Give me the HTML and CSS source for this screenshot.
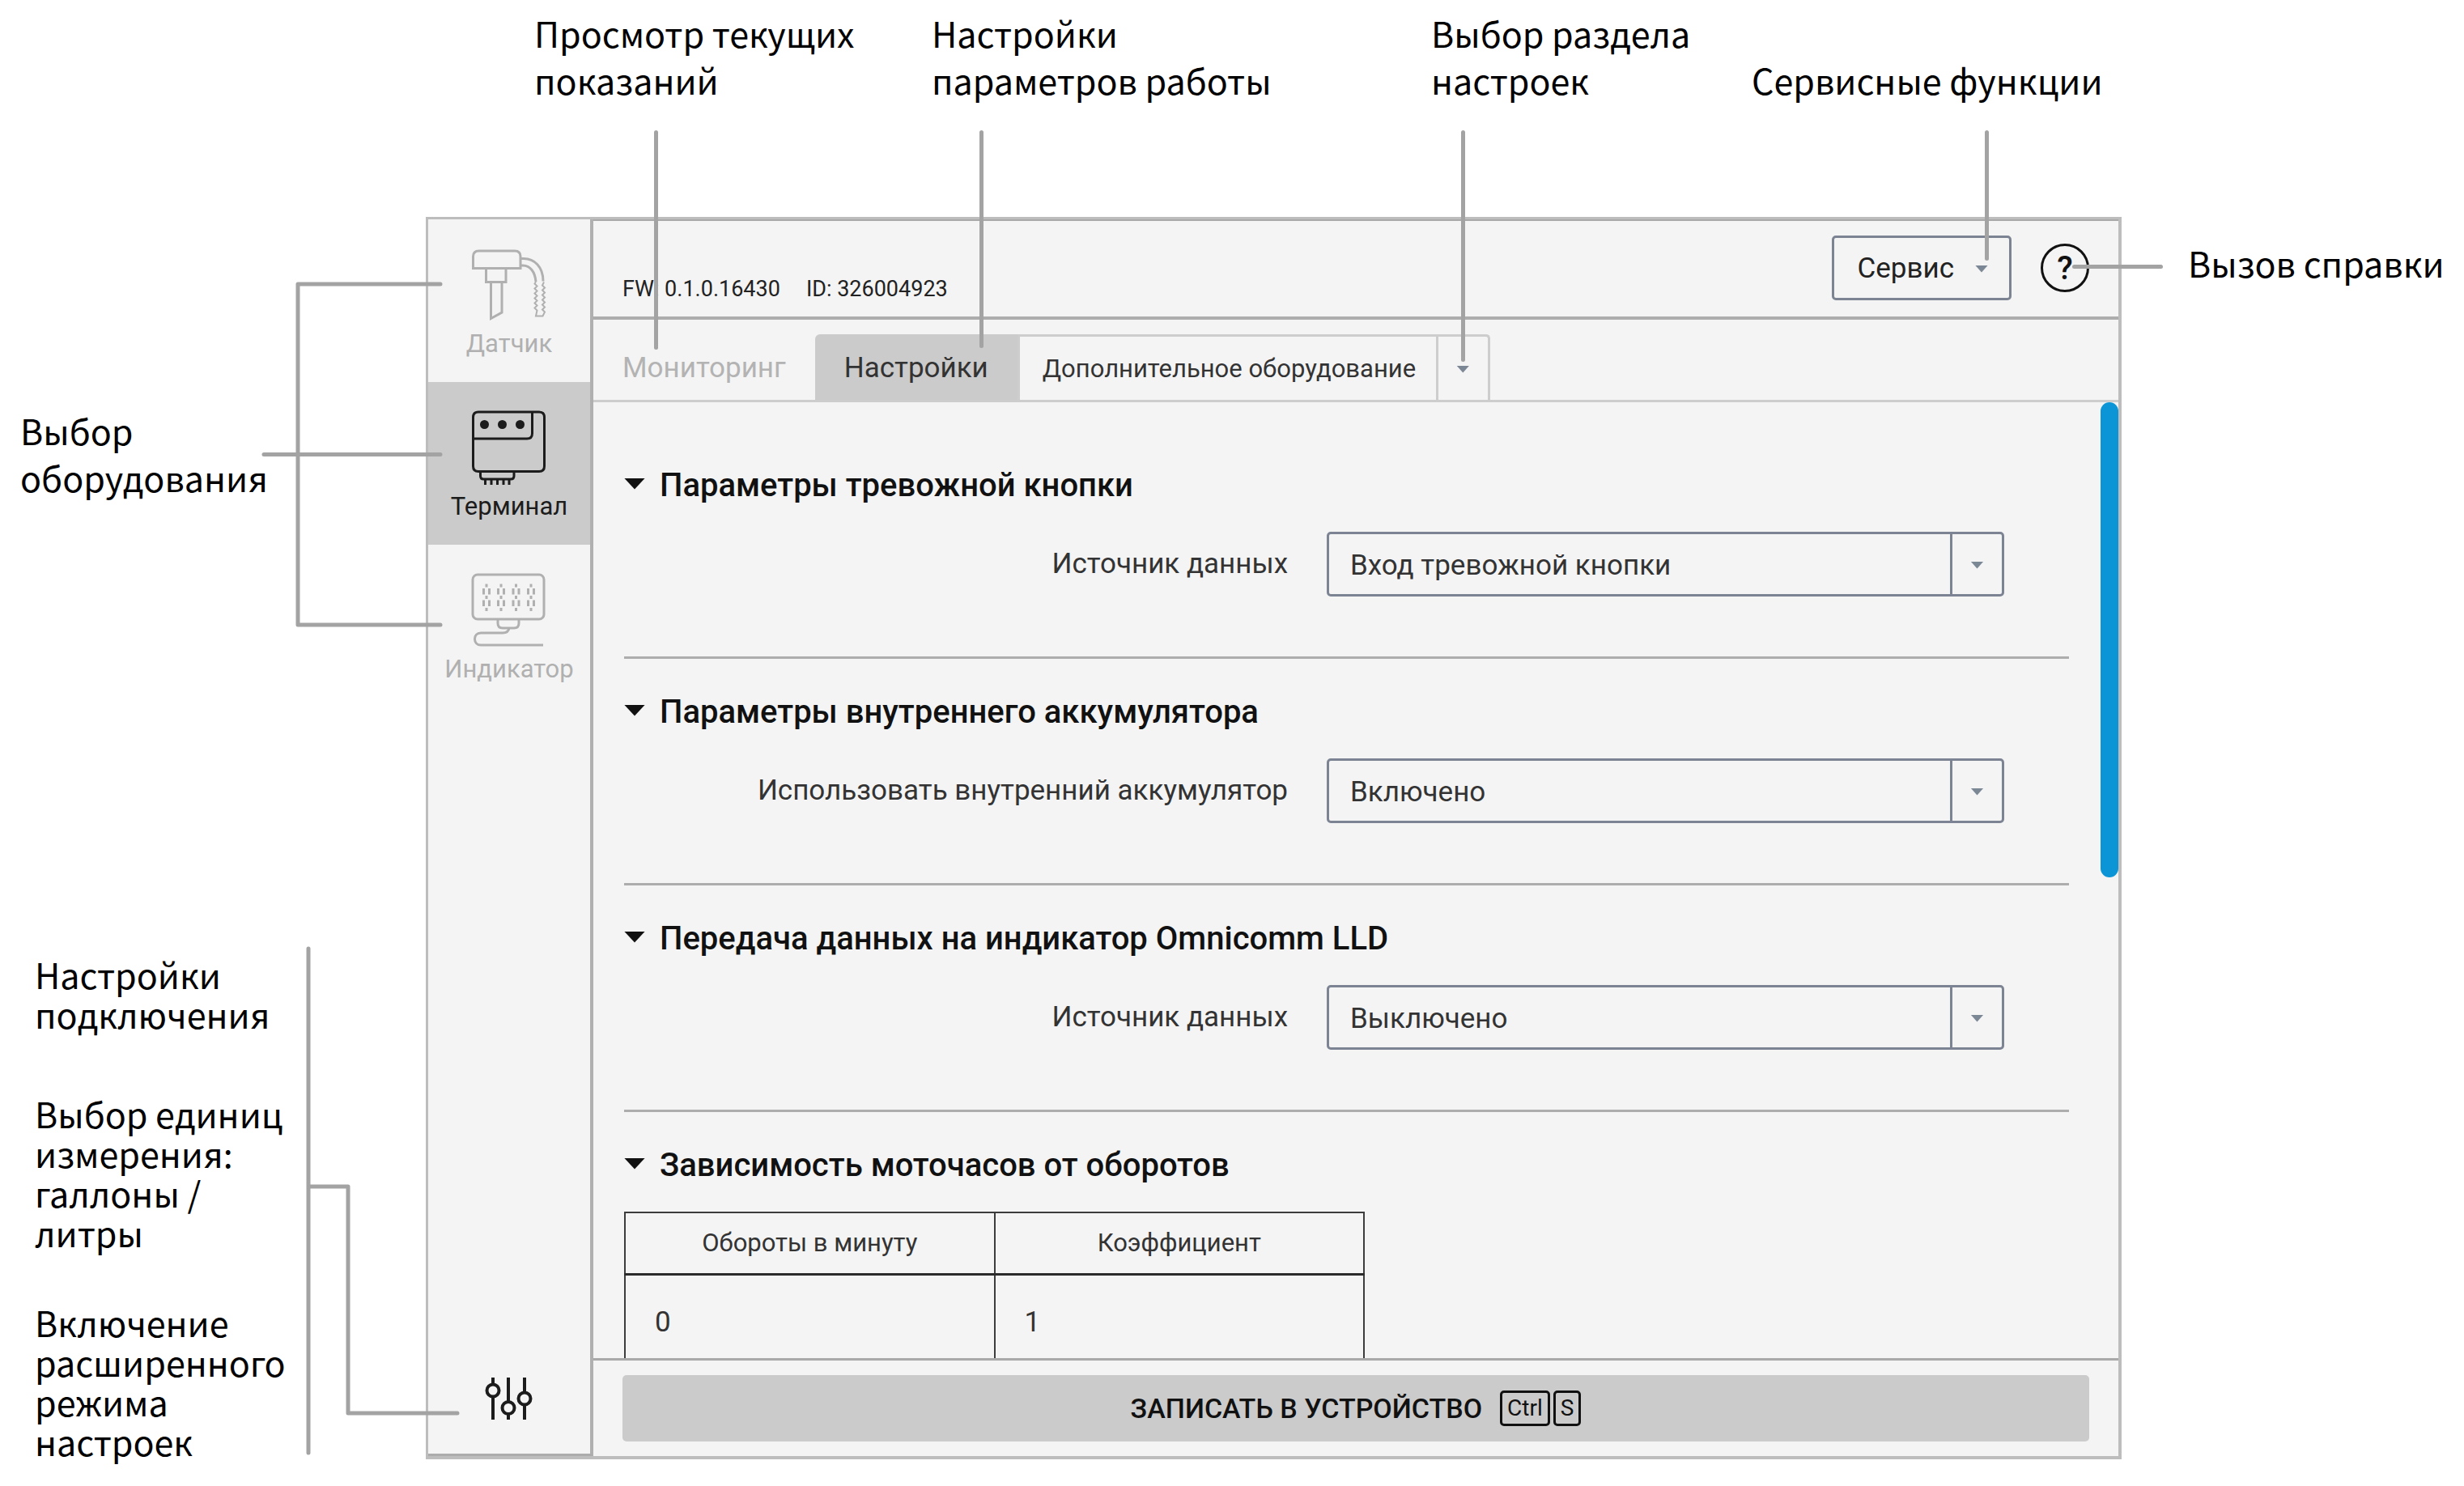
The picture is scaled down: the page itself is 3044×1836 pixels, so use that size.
FILE: index.html
```html
<!DOCTYPE html>
<html lang="ru">
<head>
<meta charset="utf-8">
<title>Настройки терминала</title>
<link rel="stylesheet" href="styles.css">
</head>
<body>
<div class="page">
  <div class="notes-top">
    <p class="note note-view">Просмотр текущих<br>показаний<span class="lead"></span></p>
    <p class="note note-params">Настройки<br>параметров работы<span class="lead"></span></p>
    <p class="note note-section">Выбор раздела<br>настроек<span class="lead"></span></p>
    <p class="note note-service"><br>Сервисные функции<span class="lead"></span></p>
  </div>

  <div class="notes-left">
    <div class="note note-equipment">Выбор<br>оборудования
      <svg class="bracket bracket-equipment" width="230" height="430" viewBox="0 0 230 430" aria-hidden="true">
        <path d="M221 5H45V426H221M3 215.500H221"/>
      </svg>
    </div>
    <div class="note-group">
      <p class="note note-tight note-first">Настройки<br>подключения</p>
      <p class="note note-tight">Выбор единиц<br>измерения:<br>галлоны /<br>литры</p>
      <p class="note note-tight">Включение<br>расширенного<br>режима<br>настроек</p>
      <svg class="bracket bracket-group" width="192" height="632" viewBox="0 0 192 632" aria-hidden="true">
        <path d="M3 3V626M3 297H52V577H187"/>
      </svg>
    </div>
  </div>

  <div class="window">
    <nav class="sidebar">
      <button type="button" class="device">
        <svg class="device-icon" viewBox="19 14 100 100" aria-hidden="true">
          <path d="M24.500 42.500V28q0-7 7-7H76q7 0 7 7v14.500zM40.500 43v16.500H65V43M46.500 60v44.500L60 97V60M84 30.500h3c13 0 24 10 24 28M84 39h2c9 0 15 8 16 20"/>
          <path class="thin" d="M102 59l-1.500 2.500 3 3-3 3 3 3-3 3 3 3-3 3 3 3-3 3 3 3-3 3 3 3-1.500 7H110.500l2.500-5-3-3 3-3-3-3 3-3-3-3 3-3-3-3 3-3-3-3 3-3-3-3 2-4"/>
        </svg>
        <span>Датчик</span>
      </button>
      <button type="button" class="device device-active">
        <svg class="device-icon" viewBox="19 15 100 100" aria-hidden="true">
          <path d="M31 20H106q6.500 0 6.500 6.500V87q0 6.500-6.500 6.500H31q-6.500 0-6.500-6.500V26.500Q24.500 20 31 20zM25 53H91q6.500 0 6.500-6.500V20M33.500 94v5q0 4 4 4H71q4 0 4-4V94"/>
          <path d="M39.500 103v7M47 103v7M54.500 103v7M62 103v7M69 103v7"/>
          <g class="solid"><circle cx="38.500" cy="35.500" r="5.500"/><circle cx="60.500" cy="35.500" r="5.500"/><circle cx="82.500" cy="35.500" r="5.500"/></g>
        </svg>
        <span>Терминал</span>
      </button>
      <button type="button" class="device">
        <svg class="device-icon" viewBox="19 16 100 100" aria-hidden="true">
          <rect x="24" y="21" width="88" height="55" rx="6"/>
          <path d="M55 77v4q0 6 6 6H75q6 0 6-6v-4M69 87q-1 6-8 6H34c-10 0-10 15 0 15H111"/>
          <g class="digits">
            <path d="M37.500 38v7.500m7-7.500v7.500M37.500 52.500V60m7-7.500V60M41 32.500v4m0 10.500v4m0 11v4"/>
            <path d="M55.500 38v7.500m7-7.500v7.500M55.500 52.500V60m7-7.500V60M59 32.500v4m0 10.500v4m0 11v4"/>
            <path d="M74 38v7.500m7-7.500v7.500M74 52.500V60m7-7.500V60M77.500 32.500v4m0 10.500v4m0 11v4"/>
            <path d="M92.500 38v7.500m7-7.500v7.500M92.500 52.500V60m7-7.500V60M96 32.500v4m0 10.500v4m0 11v4"/>
          </g>
        </svg>
        <span>Индикатор</span>
      </button>
      <button type="button" class="tune" aria-label="Настройки программы">
        <svg width="60" height="52" viewBox="0 0 60 52" aria-hidden="true">
          <path d="M10 0v8M10 23v29M29 0v30M29 45v7M49 0v18M49 33v19"/>
          <circle cx="10" cy="16" r="7.500"/><circle cx="29" cy="37.500" r="7.500"/><circle cx="49" cy="26" r="7.500"/>
        </svg>
      </button>
    </nav>

    <main class="main">
      <header class="header">
        <div class="versions"><span>FW: 0.1.0.16430</span><span>ID: 326004923</span></div>
        <div class="tools">
          <button type="button" class="service">Сервис<span class="caret"></span></button>
          <button type="button" class="help" aria-label="Справка">?</button>
        </div>
      </header>

      <div class="tabs">
        <button type="button" class="tab tab-muted">Мониторинг</button>
        <button type="button" class="tab tab-active">Настройки</button>
        <div class="combo combo-tab">
          <select aria-label="Раздел настроек"><option>Дополнительное оборудование</option></select>
          <span class="combo-arrow"><span class="caret"></span></span>
        </div>
      </div>

      <div class="content">
        <div class="sections">
          <section class="section">
            <h2>Параметры тревожной кнопки</h2>
            <div class="field">
              <label for="alarm">Источник данных</label>
              <div class="combo">
                <select id="alarm"><option>Вход тревожной кнопки</option></select>
                <span class="combo-arrow"><span class="caret"></span></span>
              </div>
            </div>
          </section>
          <section class="section">
            <h2>Параметры внутреннего аккумулятора</h2>
            <div class="field">
              <label for="battery">Использовать внутренний аккумулятор</label>
              <div class="combo">
                <select id="battery"><option>Включено</option></select>
                <span class="combo-arrow"><span class="caret"></span></span>
              </div>
            </div>
          </section>
          <section class="section">
            <h2>Передача данных на индикатор Omnicomm LLD</h2>
            <div class="field">
              <label for="lld">Источник данных</label>
              <div class="combo">
                <select id="lld"><option>Выключено</option></select>
                <span class="combo-arrow"><span class="caret"></span></span>
              </div>
            </div>
          </section>
          <section class="section">
            <h2>Зависимость моточасов от оборотов</h2>
            <table class="rates">
              <thead><tr><th>Обороты в минуту</th><th>Коэффициент</th></tr></thead>
              <tbody><tr><td>0</td><td>1</td></tr></tbody>
            </table>
          </section>
        </div>
        <div class="scrollbar"><div class="thumb"></div></div>
      </div>

      <footer class="footer">
        <button type="button" class="save">ЗАПИСАТЬ В УСТРОЙСТВО<span class="keys"><kbd>Ctrl</kbd><kbd>S</kbd></span></button>
      </footer>
    </main>
  </div>

  <div class="notes-right">
    <p class="note note-help">Вызов справки<span class="lead"></span></p>
  </div>
</div>
</body>
</html>
```
FILE: styles.css
```css
* { box-sizing: border-box; }

body {
  margin: 0;
  background: #fff;
  color: #333;
  font-family: Roboto, "Liberation Sans", sans-serif;
  font-size: 35px;
  line-height: 48px;
}

button, select {
  margin: 0;
  padding: 0;
  border: 0;
  background: none;
  color: inherit;
  font: inherit;
}

.page {
  display: grid;
  grid-template-columns: 526px 1fr 423px;
  grid-template-rows: 268px 1fr;
  height: 100vh;
  padding-bottom: 31px;
}

/* Callouts around the window */
.note {
  position: relative;
  margin: 0;
  color: #000;
  font-family: "Noto Sans CJK JP", "Noto Sans", sans-serif;
  font-size: 43px;
  line-height: 58px;
  white-space: nowrap;
}
.note-tight { line-height: 49px; }
.note-first { margin-bottom: 12px; }

.lead {
  position: absolute;
  z-index: 2;
  top: 150px;
  width: 5px;
  border-radius: 3px;
  background: #a3a3a3;
}

.notes-top {
  grid-column: 1 / -1;
  display: grid;
  grid-template-columns: 491px 617px 396px 1fr;
  align-items: start;
  padding: 11px 0 0 660px;
}
.note-view .lead { left: 148px; height: 271px; }
.note-params .lead { left: 59px; height: 269px; }
.note-section .lead { left: 37px; height: 286px; }
.note-service .lead { left: 288px; height: 161px; }

.notes-left {
  display: flex;
  flex-direction: column;
  justify-content: space-between;
  padding-top: 234px;
}
.note-equipment { padding-left: 25px; }
.note-group {
  position: relative;
  display: grid;
  gap: 62px;
  padding-left: 43px;
}
.bracket {
  position: absolute;
  z-index: 2;
  fill: none;
  stroke: #a3a3a3;
  stroke-width: 5;
  stroke-linecap: round;
  stroke-linejoin: round;
}
.bracket-equipment { left: 323px; top: -156px; }
.bracket-group { left: 378px; top: -10px; }

.notes-right { padding: 27px 0 0 82px; }
.note-help .lead { left: -143px; top: 32px; width: 112px; height: 5px; }

/* Application window */
.window {
  display: grid;
  grid-template-columns: 204px 1fr;
  min-height: 0;
  margin-bottom: 2px;
  border: solid #bdbdbd;
  border-width: 3px 4px 4px 3px;
  background: #f4f4f4;
}

.sidebar {
  display: flex;
  flex-direction: column;
  border-right: 4px solid #b0b0b0;
  border-bottom: 3px solid #acacac;
}
.device {
  display: flex;
  flex-direction: column;
  align-items: center;
  height: 201px;
  padding-top: 32px;
  color: #b0b0b0;
  font-size: 31px;
  line-height: 44px;
}
.device-active { background: #cbcbcb; color: #1c1c1c; }
.device-icon {
  width: 100px;
  height: 100px;
  fill: none;
  stroke: currentColor;
  stroke-width: 3;
}
.device-icon .thin { stroke-width: 2; }
.device-icon .solid { fill: currentColor; stroke: none; }
.tune {
  display: flex;
  justify-content: center;
  margin-top: auto;
  padding-bottom: 42px;
}
.tune svg { fill: none; stroke: #1c1c1c; stroke-width: 4; }

.main {
  display: flex;
  flex-direction: column;
  min-width: 0;
  min-height: 0;
  border-top: 2px solid #a9a9a9;
}

.header {
  display: flex;
  align-items: flex-end;
  justify-content: space-between;
  padding: 18px 36px 20px;
  border-bottom: 4px solid #adadad;
}
.versions {
  display: flex;
  gap: 32px;
  color: #222;
  font-size: 27px;
  line-height: 28px;
}
.tools { display: flex; align-items: center; gap: 36px; }
.service {
  display: flex;
  align-items: center;
  gap: 26px;
  height: 80px;
  padding: 2px 26px 0 28px;
  border: 3px solid #7c8493;
  border-radius: 5px;
  color: #222;
}
.caret {
  width: 16px;
  height: 9px;
  background: #7c8796;
  clip-path: polygon(0 0, 100% 0, 50% 100%);
}
.help {
  width: 60px;
  height: 60px;
  padding-top: 2px;
  border: 3px solid #111;
  border-radius: 50%;
  color: #111;
  font-size: 40px;
  font-weight: 500;
}

.tabs {
  display: flex;
  padding-top: 18px;
  border-bottom: 3px solid #cdcdcd;
}
.tab { height: 81px; padding: 2px 36px 0; border-radius: 6px 6px 0 0; }
.tab-muted { color: #b3b3b3; }
.tab-active { border-top-right-radius: 0; background: #cbcbcb; }

.combo {
  display: grid;
  grid-template-columns: 1fr 64px;
  height: 80px;
  border: 3px solid #7c8493;
  border-radius: 5px;
}
.combo select {
  grid-area: 1 / 1 / 2 / 3;
  appearance: none;
  padding: 3px 64px 0 26px;
}
.combo-arrow {
  grid-area: 1 / 2 / 2 / 3;
  display: flex;
  align-items: center;
  justify-content: center;
  padding-top: 2px;
  border-left: 3px solid #7c8493;
  pointer-events: none;
}
.combo-tab {
  width: 584px;
  height: 81px;
  border-color: #cdcdcd;
  border-bottom: 0;
  border-radius: 0 5px 0 0;
  font-size: 31px;
}
.combo-tab select { padding: 2px 64px 0 28px; }
.combo-tab .combo-arrow { border-color: #cdcdcd; }

.content {
  display: flex;
  flex: 1;
  gap: 39px;
  min-height: 0;
  padding-left: 38px;
  overflow: hidden;
}
.sections { flex: 1; padding-top: 37px; }
.section { padding: 42px 0 74px; border-bottom: 3px solid #adadad; }
.section h2 {
  display: flex;
  align-items: center;
  gap: 18px;
  margin: 0 0 33px;
  color: #111;
  font-size: 40px;
  font-weight: 500;
  line-height: 48px;
}
.section h2::before {
  content: "";
  width: 26px;
  height: 14px;
  margin-bottom: 5px;
  background: #111;
  clip-path: polygon(0 0, 100% 0, 50% 100%);
}
.field {
  display: grid;
  grid-template-columns: 820fr 837fr;
  align-items: center;
  gap: 48px;
  padding-right: 80px;
}
.field label { text-align: right; }

.rates {
  width: 915px;
  border-collapse: collapse;
  table-layout: fixed;
}
.rates th, .rates td { border: 2px solid #3c3c3c; }
.rates th {
  height: 76px;
  padding: 0;
  border-bottom: 3px solid #2b2b2b;
  font-size: 31px;
  font-weight: 400;
}
.rates td { height: 120px; padding: 0 36px; }

.scrollbar { width: 22px; }
.thumb { height: 587px; border-radius: 11px; background: #0b95d6; }

.footer { padding: 18px 36px; border-top: 3px solid #a9a9a9; }
.save {
  display: flex;
  align-items: center;
  justify-content: center;
  gap: 22px;
  width: 100%;
  height: 82px;
  border-radius: 5px;
  background: #cbcbcb;
  color: #111;
  font-size: 34px;
  font-weight: 500;
}
.keys { display: flex; gap: 4px; }
.keys kbd {
  padding: 0 6px;
  border: 3px solid #111;
  border-radius: 5px;
  font: 400 28px/38px Roboto, sans-serif;
}
```
